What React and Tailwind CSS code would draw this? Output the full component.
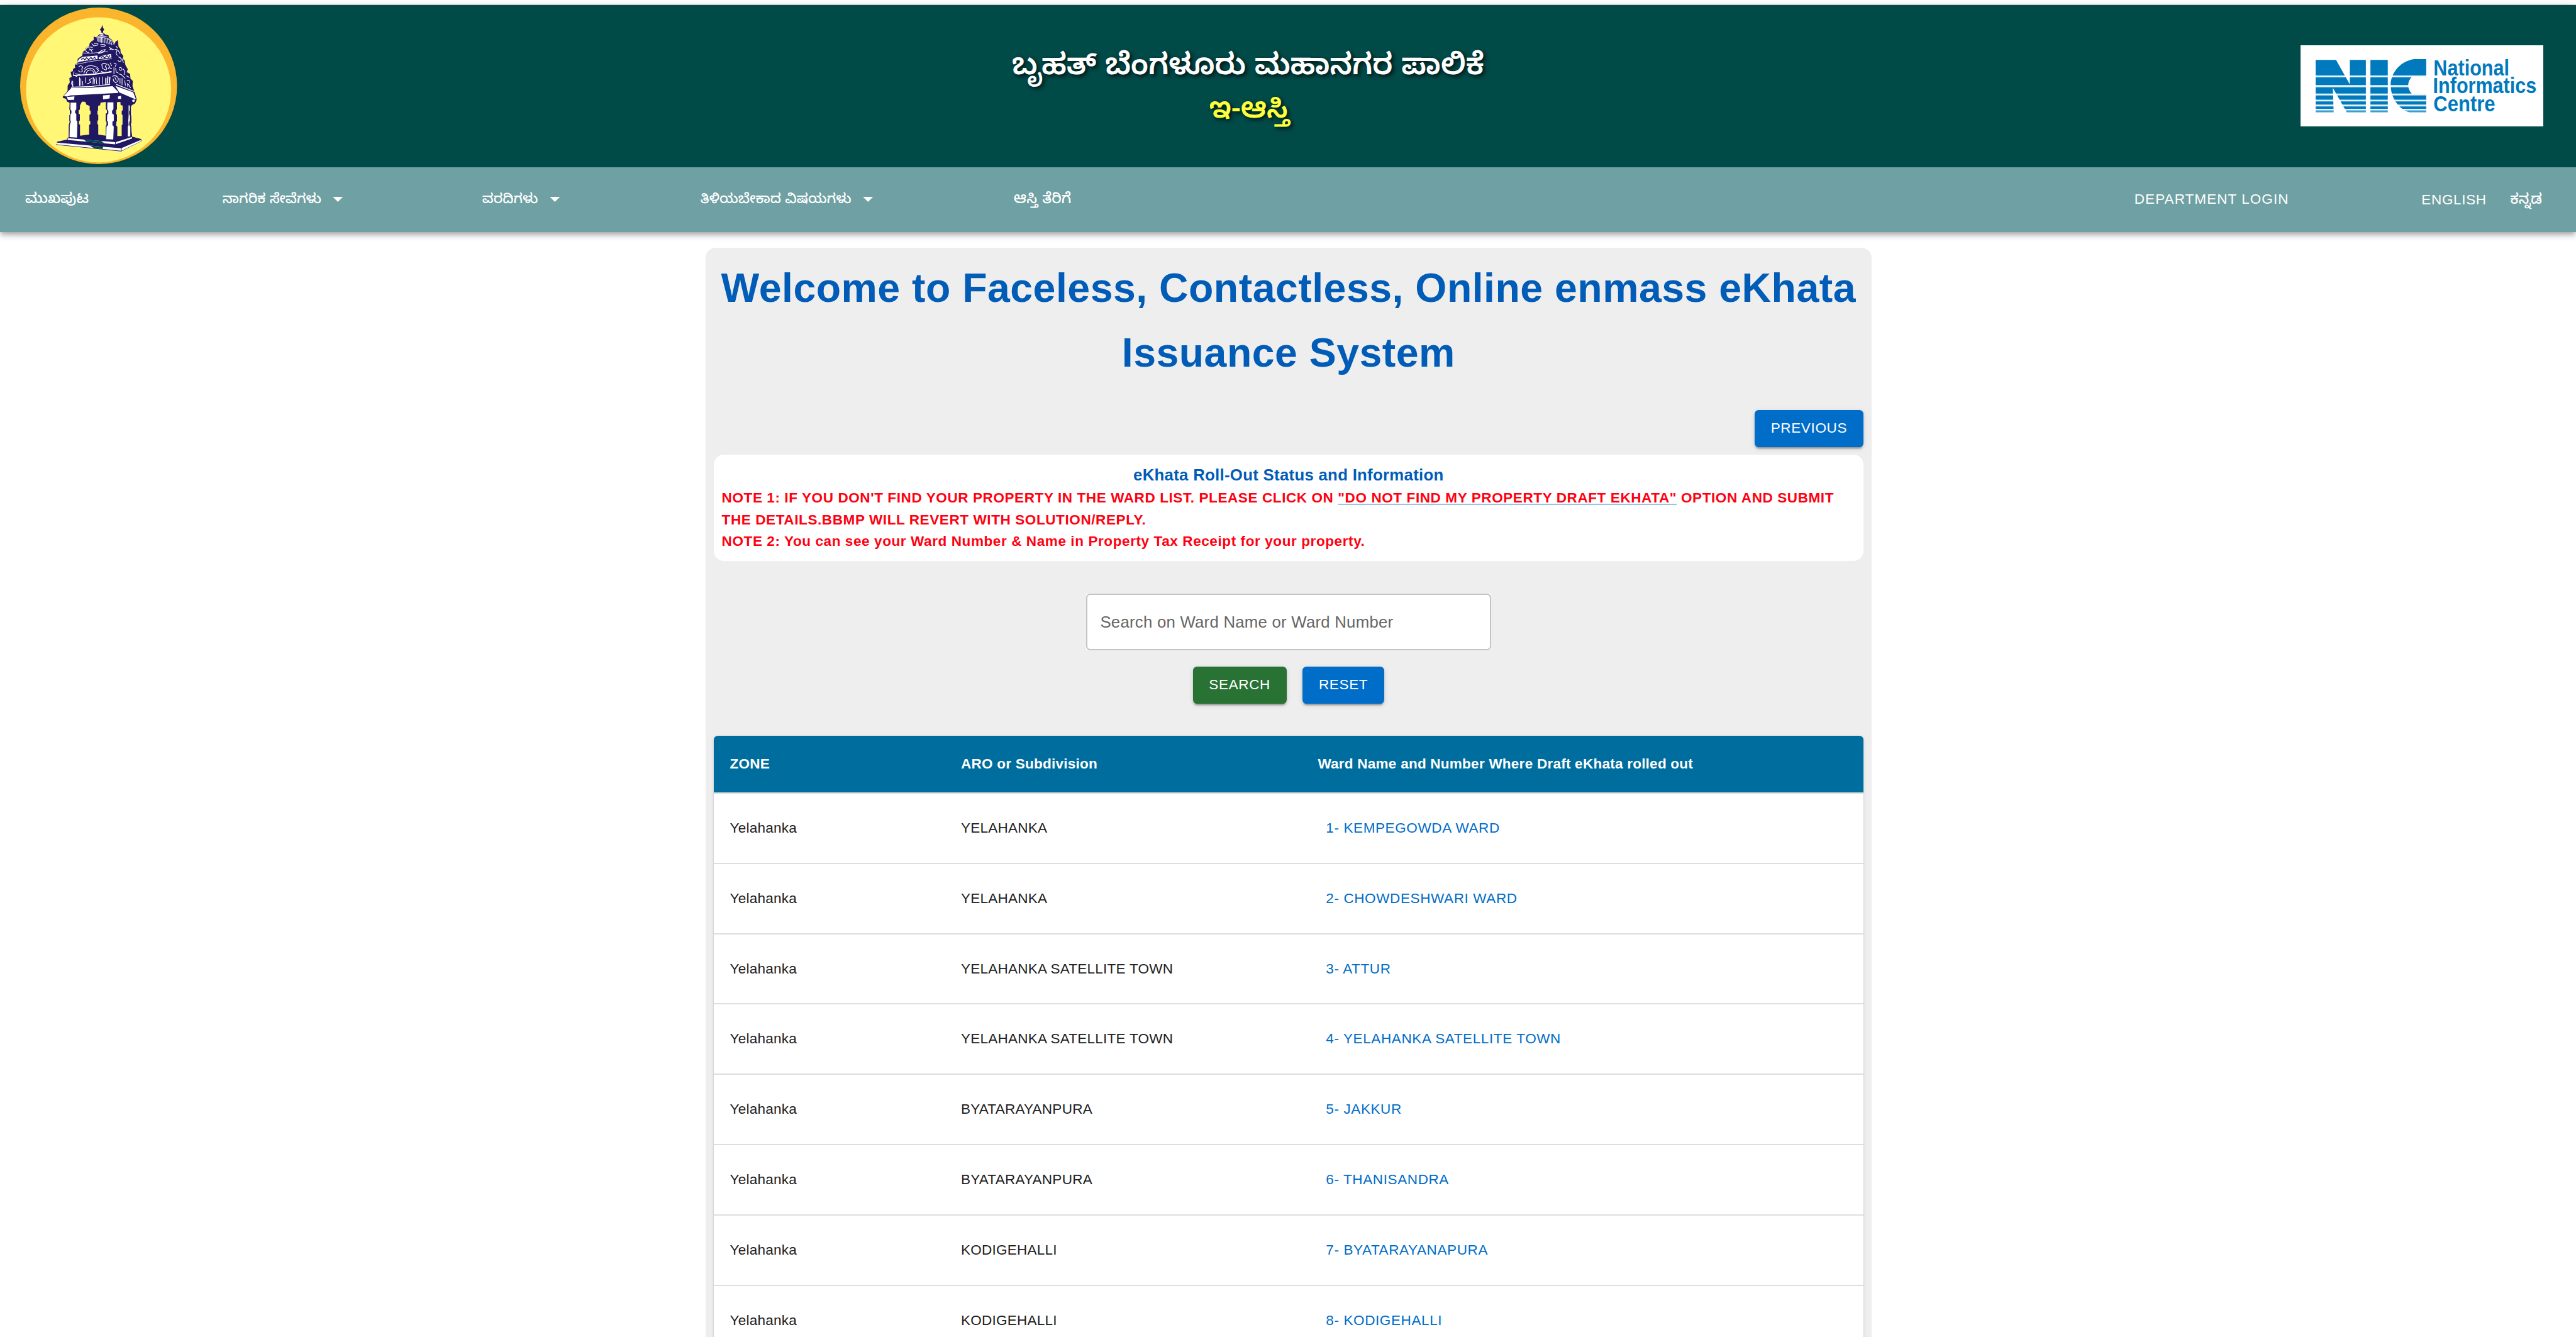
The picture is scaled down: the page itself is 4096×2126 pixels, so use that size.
const KN = "font-['Noto_Sans_Kannada','Noto_Sans',sans-serif]";

const ROWS = [
  ["Yelahanka", "YELAHANKA", "1- KEMPEGOWDA WARD"],
  ["Yelahanka", "YELAHANKA", "2- CHOWDESHWARI WARD"],
  ["Yelahanka", "YELAHANKA SATELLITE TOWN", "3- ATTUR"],
  ["Yelahanka", "YELAHANKA SATELLITE TOWN", "4- YELAHANKA SATELLITE TOWN"],
  ["Yelahanka", "BYATARAYANPURA", "5- JAKKUR"],
  ["Yelahanka", "BYATARAYANPURA", "6- THANISANDRA"],
  ["Yelahanka", "KODIGEHALLI", "7- BYATARAYANAPURA"],
  ["Yelahanka", "KODIGEHALLI", "8- KODIGEHALLI"],
];

function Emblem() {
  return (
    <svg viewBox="120 47 930 928" className="h-[249px] w-[249.5px] shrink-0">
      <ellipse cx="585" cy="511" rx="465" ry="464" fill="#fbb52d" />
      <ellipse cx="585" cy="534.5" rx="430" ry="430" fill="#fff775" />
      <g fill="#211863">
        {/* tower silhouette */}
        <path d="M401 545L402 508L414 492L412 464L426 458L419 428L432 424L434 410L446 404L444 385L458 378L462 350L488 332L492 310L505 300L508 288L530 274L532 258L545 245L556 240L556 218L570 224L590 205L602 196L600 186L592 178L601 168L607 150L612 168L619 177L612 186L611 196L628 208L644 212L646 226L662 236L680 264L686 248L700 240L703 278L714 292L716 314L732 334L728 350L740 362L744 388L758 412L752 430L772 440L774 468L788 482L786 512L796 540L700 560Z" />
        {/* roof, beam and hall */}
        <path d="M372 576L424 516L672 506L798 546L811 592L802 614L782 626L775 640L784 812L838 826L838 840L718 900L332 860L340 842L398 830L400 818L410 816L414 612L398 604L392 588L374 582Z" />
      </g>
      {/* openings between the pillars */}
      <g fill="#fff775">
        <path d="M475 627L487 604L507 606L512 622L532 630V655L538 660V678L531 683V718L536 722V738L529 742V800L475 806V740L469 738V720L474 716V680L467 676V655L474 652Z" />
        <path d="M597 611L628 606V650L635 655V672L627 676V718L632 724V742L627 750V806L583 800V740L578 738V718L583 715V683L578 680V660L582 655V630L594 626Z" />
        <path d="M694 608L714 606L716 625L728 628V655L722 660V680L727 684V740L722 745V808H696V752L690 748V725L694 720V682L689 678V655L694 650Z" />
        <path d="M392 604L416 616L411 814L396 820L330 840V700Z" />
        <path d="M782 628L812 612L850 700L842 826L784 810L776 740L781 722L778 680L781 660Z" />
      </g>
      <g fill="none" stroke="#211863" strokeWidth="5">
        <path d="M416 608L414 650L420 660V678L414 686V718L418 722L411 742L410 818" />
        <path d="M773 630L775 655L771 662V680L776 690V718L772 724V745L776 752V812" />
      </g>
      <g fill="#fff">
        <path d="M378 572L424 523L540 522L668 513L703 548L700 553L560 560L418 568L400 574Z" />
        <path d="M684 511L790 549L806 588L798 588L708 550Z" />
        <path d="M396 577L442 573L440 594L404 595Z" />
        <path d="M611 568L652 564L650 586L612 591Z" />
        <path d="M700 574L718 570V589L701 587Z" />
        <path d="M785 594L801 592L796 608L785 604Z" />
        <path d="M419 611H453V651L446 658V672L453 678V716L459 722V742L457 818L413 815L415 742L421 722L417 716L418 680L424 673V658L418 651Z" />
        <path d="M637 609H673V650L665 658V674L675 682V718L667 724V744L675 752L672 829L630 827L632 752L641 744V724L635 718L636 682L643 675V658L636 650Z" />
        <path d="M763 626L770 628V655L766 662V680L771 688V718L767 724V745L773 752V811H758V752L763 744L761 720L763 690Z" />
        {/* plinth */}
        <path d="M402 821L683 845V858L402 832Z" />
        <path d="M687 845L783 814V823L687 857Z" />
        <path d="M336 847L717 881V896L334 858Z" />
        <path d="M721 880L835 832V840L721 896Z" />
      </g>
      <g fill="#004a48">
        <path d="M497 829L600 837L620 852L515 843Z" />
        <path d="M532 865L612 872L609 886L560 881Z" />
      </g>
      {/* carving */}
      <g fill="#fff">
        <path d="M568 222Q605 198 645 224Q605 214 568 222Z" />
        <path d="M590 204Q603 190 616 204Q603 211 590 204Z" />
        <path d="M470 352L490 340L578 331L580 352L470 368L455 376Z" />
        <path d="M588 342L610 332L658 322L662 342L586 353Z" />
        <path d="M582 318Q600 294 628 294Q622 316 582 322Z" />
      </g>
      <g fill="none" stroke="#211863" strokeWidth="5" strokeLinecap="round" strokeLinejoin="round">
        <path d="M484 354L496 346L502 358L514 344L526 356L540 342L548 354L562 340L566 350M600 344L612 336L620 346L634 332L644 342L652 332M596 314Q606 304 618 300" />
      </g>
      <g fill="none" stroke="#fff" strokeWidth="4" strokeLinecap="round" strokeLinejoin="round">
        <path d="M578 228L577 246M586 227L586 250M594 226V252M602 225V254M610 225L611 254M618 226L620 256M627 228L631 258M636 231L642 262M645 234L653 264M654 240L664 267" />
        <path d="M572 226Q615 216 660 240Q672 254 677 268" strokeWidth="3" />
        <path d="M545 262L556 274L580 270M548 284Q520 274 508 298Q512 316 528 312M530 292Q548 300 546 316M560 262Q572 256 582 264M596 268Q610 262 626 270L618 278L600 276M650 282Q660 296 674 296M652 296L664 290" />
        <path d="M494 316L540 318L640 308M552 294L530 300" strokeWidth="3" />
        <path d="M682 296Q700 290 692 308Q684 326 700 330M700 300L712 320M704 340Q722 344 718 362Q708 372 700 360M724 352L732 372M690 276L696 286" />
        <path d="M450 384L540 366L662 350" strokeWidth="3" />
        <path d="M468 398Q480 384 492 400Q480 410 490 424Q474 436 466 420M440 428L436 446L456 456M446 440L476 444M500 412Q512 390 544 392Q580 396 584 412M498 436Q506 408 536 406Q562 408 566 436M510 444Q514 418 536 416Q556 420 558 442M570 408L586 420L572 432" />
        <path d="M604 384Q616 372 632 382L624 398Q640 406 628 418L608 408ZM640 382L650 396L642 410M654 376L662 392M600 424L620 434L642 430M648 404L662 408M650 424L660 428" />
        <path d="M438 450L560 442L660 428" strokeWidth="7" />
        <path d="M428 480L424 498L434 514M432 484V516M472 462V510M480 468V508M490 484L492 508M508 462V492M516 500L540 490L530 476L548 464M554 462L552 500M562 470L560 500M570 460L574 500M590 460V504M610 458V502" />
        <path d="M628 466V500M640 458L638 494M652 460L648 496" strokeWidth="7" />
        <path d="M676 376L690 382L684 396M676 402V440M686 408L690 430L700 434M708 404Q722 398 724 414Q716 426 708 412M732 412L742 428L736 444M704 440L720 444L742 466M668 454Q690 444 702 466Q704 486 686 492Q672 486 672 470M682 462L690 478M712 466V496M724 466V504M740 480L744 508M752 452L766 460M754 478Q772 476 770 494M762 502L774 522M756 496L758 516" />
        <path d="M424 519L545 514L652 502M690 502L790 542" strokeWidth="5" />
      </g>
    </svg>
  );
}

const NIC_BANDS = [
  [98, 99],
  [208, 46],
  [267, 37],
  [315, 26],
  [351, 19],
  [381, 14],
];

function NicLogo() {
  const letters = (
    <>
      <path d="M107 105H228L310 250V105H405V416H292L209 270L214 416H107Z" />
      <path d="M432 105H535V416H432Z" />
      <path d="M763 100H692C606 112 552 185 552 252C552 330 600 398 665 416H763V309H680C648 275 648 235 680 203H763Z" />
    </>
  );
  return (
    <svg viewBox="18 18 1440 480" className="h-[128.7px] w-[386.3px] bg-white">
      <defs>
        <clipPath id="nic-bands">
          {NIC_BANDS.map(([y, h]) => (
            <rect key={y} x="100" y={y} width="670" height={h} />
          ))}
        </clipPath>
        <clipPath id="nic-gaps">
          <rect x="100" y="197" width="670" height="219" />
        </clipPath>
        <clipPath id="nic-last">
          <rect x="100" y="404" width="670" height="12" />
        </clipPath>
      </defs>
      <g fill="#e3f1f9" clipPath="url(#nic-gaps)">{letters}</g>
      <g fill="#0079bd" clipPath="url(#nic-bands)">{letters}</g>
      <g fill="#449dd0" clipPath="url(#nic-last)">{letters}</g>
      <g fill="#0079bd" className="font-['Liberation_Sans',Arial,sans-serif] text-[130px] font-bold">
        <text x="806" y="197" textLength="450" lengthAdjust="spacingAndGlyphs">National</text>
        <text x="803" y="300" textLength="614" lengthAdjust="spacingAndGlyphs">Informatics</text>
        <text x="806" y="408" textLength="366" lengthAdjust="spacingAndGlyphs">Centre</text>
      </g>
    </svg>
  );
}

function Caret() {
  return (
    <svg viewBox="0 0 10 5" className="ml-[18.5px] h-[8px] w-[16.5px] shrink-0" fill="#fff">
      <path d="M0 0L5 5L10 0Z" />
    </svg>
  );
}

const KN_ITEM = "flex items-center font-medium whitespace-nowrap";
const EN_ITEM = "text-[22.53px] whitespace-nowrap";
const BTN =
  "flex h-[58.8px] items-center justify-center rounded-[6.4px] text-[22.53px] tracking-[0.644px] text-white shadow-[0_5px_2px_-3px_rgba(0,0,0,0.2),0_3px_3px_0_rgba(0,0,0,0.14),0_2px_8px_0_rgba(0,0,0,0.12)]";

export default function App() {
  return (
    <div className="h-[2126px] w-[4096px] overflow-hidden bg-white font-['Liberation_Sans',Arial,sans-serif] text-[#212121]">
      <div className="h-[8px] border-b-[2px] border-[#e0e0e0]" />
      <header className="relative shadow-[0_3.2px_6.4px_-1.6px_rgba(0,0,0,0.2),0_6.4px_8px_0_rgba(0,0,0,0.14),0_1.6px_16px_0_rgba(0,0,0,0.12)]">
        <div className="flex h-[257.6px] items-center justify-between bg-[#004a48] pr-[51.5px] pl-[32px]">
          <Emblem />
          <div className={`${KN} flex flex-col items-center pt-[21px] pl-[29px] font-semibold [text-shadow:3.2px_3.2px_6.4px_rgba(0,0,0,0.75)]`}>
            <h1 className="text-[47.5px] leading-[69px] text-white">ಬೃಹತ್ ಬೆಂಗಳೂರು ಮಹಾನಗರ ಪಾಲಿಕೆ</h1>
            <h2 className="pl-[4px] text-[45.5px] leading-[69px] text-[#ffff3b]">ಇ-ಆಸ್ತಿ</h2>
          </div>
          <NicLogo />
        </div>
        <nav className="flex h-[103px] items-center bg-[#6fa0a3] pl-[40px] text-white">
          <div className={`${KN} flex text-[22px]`}>
            <div className={`${KN_ITEM} w-[313.8px] text-[23.4px]`}><span className="pt-[7px]">ಮುಖಪುಟ</span></div>
            <div className={`${KN_ITEM} w-[413px]`}><span className="pt-[7px]">ನಾಗರಿಕ ಸೇವೆಗಳು</span><Caret /></div>
            <div className={`${KN_ITEM} w-[347px]`}><span className="pt-[7px]">ವರದಿಗಳು</span><Caret /></div>
            <div className={`${KN_ITEM} w-[498px]`}><span className="pt-[7px]">ತಿಳಿಯಬೇಕಾದ ವಿಷಯಗಳು</span><Caret /></div>
            <div className={`${KN_ITEM} w-[1782px] text-[23.4px]`}><span className="pt-[7px]">ಆಸ್ತಿ ತೆರಿಗೆ</span></div>
          </div>
          <div className="flex items-center">
            <div className={`${EN_ITEM} w-[456.5px] tracking-[1.05px]`}>DEPARTMENT LOGIN</div>
            <div className={`${EN_ITEM} w-[141px] pt-[1px] tracking-[0.66px]`}>ENGLISH</div>
            <div className={`${KN} ${KN_ITEM} pt-[8px] text-[22.8px]`}>ಕನ್ನಡ</div>
          </div>
        </nav>
      </header>

      <main className="mt-[25.7px] ml-[1121.8px] w-[1854px] rounded-t-[16px] bg-[#eeeeee] px-[12.9px] pt-[12.9px]">
        <h2 className="text-center text-[64.4px] leading-[103px] font-bold tracking-[0.5px] whitespace-nowrap text-[#005cb7]">
          Welcome to Faceless, Contactless, Online enmass eKhata
          <br />
          Issuance System
        </h2>
        <div className="mt-[38.6px] flex justify-end">
          <button className={`${BTN} w-[173px] bg-[#006dc8]`}>PREVIOUS</button>
        </div>

        <section className="mt-[12.9px] h-[169px] rounded-[16px] bg-white px-[12.9px] pt-[12.9px] font-bold">
          <h3 className="text-center text-[25.75px] leading-[38.6px] tracking-[0.3px] text-[#005cb7]">
            eKhata Roll-Out Status and Information
          </h3>
          <p className="text-[22.53px] leading-[34.6px] tracking-[0.59px] whitespace-nowrap text-[#ff0010]">
            NOTE 1: IF YOU DON'T FIND YOUR PROPERTY IN THE WARD LIST. PLEASE CLICK ON{" "}
            <a className="underline decoration-[#97c5ea] decoration-[2px] underline-offset-[2px]">"DO NOT FIND MY PROPERTY DRAFT EKHATA"</a>{" "}
            OPTION AND SUBMIT
            <br />
            THE DETAILS.BBMP WILL REVERT WITH SOLUTION/REPLY.
            <br />
            NOTE 2: You can see your Ward Number &amp; Name in Property Tax Receipt for your property.
          </p>
        </section>

        <div className="mt-[51.5px] flex flex-col items-center">
          <div className="w-[643.8px] bg-white">
            <div className="flex h-[90.1px] items-center rounded-[6.4px] border-2 border-[#c4c4c4] px-[20.5px] text-[25.75px] tracking-[0.25px] text-[#666666]">
              Search on Ward Name or Ward Number
            </div>
          </div>
          <div className="mt-[25.75px] flex gap-[25.75px]">
            <button className={`${BTN} w-[148.8px] bg-[#287233]`}>SEARCH</button>
            <button className={`${BTN} w-[129.5px] bg-[#006dc8]`}>RESET</button>
          </div>
        </div>

        <div className="mt-[51.5px] overflow-clip rounded-t-[6.4px] bg-white text-[22.53px] tracking-[0.24px] shadow-[0_3.2px_1.6px_-1.6px_rgba(0,0,0,0.2),0_1.6px_1.6px_0_rgba(0,0,0,0.14),0_1.6px_4.8px_0_rgba(0,0,0,0.12)]">
          <div className="grid h-[91.7px] grid-cols-[367.5px_567.5px_1fr] items-center border-b-2 border-[#dcdcdc] bg-[#006d9f] pl-[25.75px] font-bold text-white">
            <span>ZONE</span>
            <span>ARO or Subdivision</span>
            <span>Ward Name and Number Where Draft eKhata rolled out</span>
          </div>
          {ROWS.map(([zone, aro, ward]) => (
            <div key={ward} className="grid h-[111.86px] grid-cols-[367.5px_580.4px_1fr] items-center border-b-2 border-[#dedede] pl-[25.75px]">
              <span>{zone}</span>
              <span>{aro}</span>
              <a className="tracking-[0.6px] text-[#006dc8]">{ward}</a>
            </div>
          ))}
        </div>
      </main>
    </div>
  );
}
